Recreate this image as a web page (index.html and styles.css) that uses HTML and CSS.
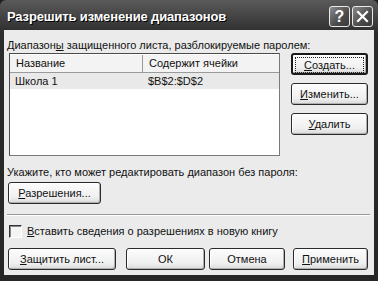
FILE: index.html
```html
<!DOCTYPE html>
<html>
<head>
<meta charset="utf-8">
<link rel="stylesheet" href="styles.css">
</head>
<body>
<div class="window">
  <div class="titlebar">
    <span class="title">Разрешить изменение диапазонов</span>
    <div class="tbtns">
      <span class="tbtn">?</span>
      <span class="tbtn close"><svg width="13" height="13" viewBox="0 0 13 13"><path d="M2 2 L11 11 M11 2 L2 11" stroke="#fff" stroke-width="2.2" stroke-linecap="square"/></svg></span>
    </div>
  </div>
  <div class="client">
    <div class="label first">Диапазон<u>ы</u> защищенного листа, разблокируемые паролем:</div>
    <div class="top">
      <div class="list">
        <div class="lhead">
          <div class="c1">Название</div>
          <div class="c2">Содержит ячейки</div>
        </div>
        <div class="lrow">
          <div class="c1">Школа 1</div>
          <div class="c2">$B$2:$D$2</div>
        </div>
      </div>
      <div class="side">
        <button class="btn def"><span class="focus"><u>С</u>оздать...</span></button>
        <button class="btn"><u>И</u>зменить...</button>
        <button class="btn"><u>У</u>далить</button>
      </div>
    </div>
    <div class="label second">Укажите, кто может редактировать диапазон без пароля:</div>
    <button class="btn perm"><u>Р</u>азрешения...</button>
    <div class="sep"></div>
    <div class="check"><span class="box"></span><span><u>В</u>ставить сведения о разрешениях в новую книгу</span></div>
    <div class="bottom">
      <button class="btn b1"><u>З</u>ащитить лист...</button>
      <button class="btn b2">ОК</button>
      <button class="btn b3">Отмена</button>
      <button class="btn b4"><u>П</u>рименить</button>
    </div>
  </div>
</div>
</body>
</html>
```
FILE: styles.css
```css
html, body { margin: 0; padding: 0; background: #1e1e1e; }
.window {
  width: 378px; height: 281px; box-sizing: border-box;
  background: linear-gradient(#5a5a5a, #2c2c2c 12%, #262626);
  display: flex; flex-direction: column;
  padding: 0 4px 6px 4px;
  font-family: "Liberation Sans", Arial, sans-serif;
  font-size: 11px; color: #111;
  border-radius: 6px 6px 0 0;
}
.titlebar {
  height: 30px; flex-shrink: 0; display: flex; align-items: center; justify-content: space-between;
  padding: 0 1px 0 3px;
}
.title {
  color: #fff; font-weight: bold; font-size: 13px; letter-spacing: -0.15px;
  text-shadow: 1px 1px #000; padding-top: 2px; white-space: nowrap;
}
.tbtns { display: flex; gap: 2px; padding-top: 2px; flex-shrink: 0; }
.tbtn {
  width: 19px; height: 19px; flex-shrink: 0; border: 1px solid #e8e8e8; border-radius: 3px;
  background: linear-gradient(135deg, #8a8a8a, #4a4a4a 60%, #3a3a3a);
  color: #fff; font-weight: bold; font-size: 16px; line-height: 19px; text-align: center;
  display: flex; align-items: center; justify-content: center;
}
.client {
  flex: 1; background: #ebebeb; padding: 0 4px 0 3px;
  display: flex; flex-direction: column;
}
.label.first { margin-top: 8px; height: 14px; line-height: 14px; }
.top { display: flex; margin-top: 1px; }
.list {
  margin-left: 2px; width: 269px; height: 101px; flex-shrink: 0;
  background: #fff; border: 1px solid #7a7a7a; border-top-color: #4a4a4a; border-left-color: #4a4a4a;
}
.lhead {
  display: flex; height: 17px; background: #f3f3f3;
  border-bottom: 1px solid #9a9a9a; border-top: 1px solid #fff;
}
.lhead .c1 { width: 126px; border-right: 1px solid #9a9a9a; padding-left: 6px; line-height: 17px; }
.lhead .c2 { padding-left: 6px; line-height: 17px; }
.lrow { display: flex; height: 16px; background: #e9e9e9; line-height: 16px; }
.lrow .c1 { width: 127px; padding-left: 5px; }
.lrow .c2 { padding-left: 6px; }
.side { display: flex; flex-direction: column; margin-left: 11px; gap: 8px; }
.btn {
  font-family: "Liberation Sans", Arial, sans-serif; font-size: 11px; color: #111;
  height: 22px; padding: 0; box-sizing: border-box; flex-shrink: 0;
  border: 1px solid #2a2a2a; border-radius: 3px;
  background: linear-gradient(#fcfcfc, #f0f0f0 70%, #dadada);
  box-shadow: inset -1px -1px 0 #b0b0b0, inset 1px 1px 0 #fff;
}
.side .btn { width: 77px; }
.btn.def { border: 2px solid #1a1a1a; padding: 2px; }
.btn.def .focus { display: block; border: 1px dotted #222; height: 14px; line-height: 14px; }
.label.second { margin-top: 9px; height: 14px; line-height: 14px; }
.perm { width: 93px; margin-top: 3px; margin-left: 1px; }
.sep { margin-top: 10px; height: 0; border-top: 1px solid #9a9a9a; border-bottom: 1px solid #fff; }
.check { display: flex; align-items: center; margin-top: 8px; height: 14px; gap: 5px; }
.check .box {
  width: 11px; height: 11px; margin-left: 2px; background: #f4f4f4;
  border: 1px solid #fff; border-top-color: #333; border-left-color: #333;
  box-shadow: inset 1px 1px 0 #888;
}
.bottom { display: flex; margin-top: 10px; margin-left: 1px; }
.b1 { width: 108px; }
.b2 { width: 79px; margin-left: 10px; }
.b3 { width: 76px; margin-left: 4px; }
.b4 { width: 75px; margin-left: 8px; }
```
